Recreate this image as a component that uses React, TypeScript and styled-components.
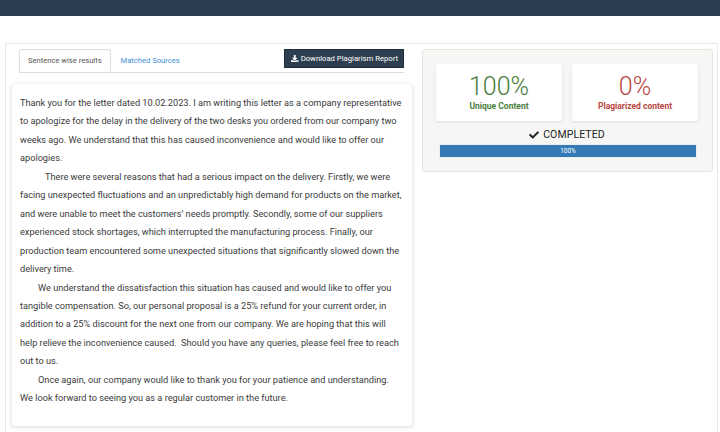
import React, { FC } from 'react';
import styled, { createGlobalStyle } from 'styled-components';
import { FaDownload, FaCheck } from 'react-icons/fa';

const GlobalStyle = createGlobalStyle`
  html, body {
    margin: 0;
    padding: 0;
    background: #ffffff;
    font-family: Roboto, 'Liberation Sans', Arial, sans-serif;
  }
`;

const TopBar = styled.header`
  height: 16px;
  background: #2c3e50;
`;

const Frame = styled.main`
  display: flex;
  gap: 10px;
  margin: 27px 2px 0 5px;
  padding: 5px 4px 0 6px;
  border: 1px solid #e8e8e8;
  border-bottom: none;
  height: 400px;
  box-sizing: border-box;
`;

const LeftColumn = styled.section`
  width: 400px;
  display: flex;
  flex-direction: column;
`;

const TabRow = styled.nav`
  display: flex;
  align-items: flex-start;
  height: 23px;
  margin: 0 8px 0 7px;
  border-bottom: 1px solid #dddddd;
`;

const Tab = styled.div<{ active?: boolean }>`
  height: 23px;
  box-sizing: border-box;
  padding: 0 8px;
  display: flex;
  align-items: center;
  font-size: 7.6px;
  color: ${({ active }) => (active ? '#555555' : '#3d8fd6')};
  background: ${({ active }) => (active ? '#ffffff' : 'transparent')};
  border: 1px solid ${({ active }) => (active ? '#dddddd' : 'transparent')};
  border-bottom-color: ${({ active }) => (active ? '#ffffff' : 'transparent')};
  border-radius: 3px 3px 0 0;
  margin-right: 1px;
`;

const DownloadButton = styled.button`
  margin-left: auto;
  height: 19px;
  padding: 0 5px 0 6px;
  display: flex;
  align-items: center;
  gap: 2px;
  border: 1px solid #1f2d3b;
  background: #2c3e50;
  color: #ffffff;
  font-family: inherit;
  font-size: 7.7px;
  cursor: pointer;
  svg {
    width: 7.5px;
    height: 7.5px;
  }
`;

const TextCard = styled.article`
  margin-top: 11px;
  height: 342px;
  box-sizing: border-box;
  padding: 10px 10px 19px 8px;
  background: #ffffff;
  border-radius: 3px;
  box-shadow: 0 1px 4px rgba(0, 0, 0, 0.16);
  font-size: 9.2px;
  line-height: 18.45px;
  color: #3b3b3b;
`;

const Paragraph = styled.p<{ indent: number }>`
  margin: 0;
  text-indent: ${({ indent }) => indent}px;
`;

const RightColumn = styled.aside`
  width: 291px;
`;

const SummaryPanel = styled.div`
  box-sizing: border-box;
  padding: 14px 14px 13px 13px;
  background: #f6f6f5;
  border: 1px solid #e6e6dc;
  border-radius: 3px;
`;

const StatRow = styled.div`
  display: flex;
  gap: 10px;
`;

const StatCard = styled.div<{ tone: string }>`
  flex: 1;
  height: 57px;
  display: flex;
  flex-direction: column;
  align-items: center;
  justify-content: center;
  background: #ffffff;
  border-radius: 2px;
  box-shadow: 0 1px 3px rgba(0, 0, 0, 0.1);
  color: ${({ tone }) => tone};
`;

const StatValue = styled.div`
  font-size: 25px;
  font-weight: 300;
  line-height: 26px;
`;

const StatLabel = styled.div`
  font-size: 8.5px;
  font-weight: 700;
  line-height: 12px;
`;

const Status = styled.div`
  margin-top: 8px;
  display: flex;
  align-items: center;
  justify-content: center;
  gap: 4px;
  font-size: 10.5px;
  line-height: 12px;
  color: #222222;
  letter-spacing: 0.1px;
  svg {
    width: 10px;
    height: 10px;
  }
`;

const ProgressTrack = styled.div`
  margin: 3px 1px 0 3px;
  height: 14px;
  box-sizing: border-box;
  padding: 1px;
  background: #ececec;
  border-radius: 1px;
`;

const ProgressFill = styled.div`
  height: 100%;
  background: #337ab7;
  color: #ffffff;
  font-size: 6.5px;
  display: flex;
  align-items: center;
  justify-content: center;
`;

const letter: { indent: number; text: string }[] = [
  {
    indent: 0,
    text: 'Thank you for the letter dated 10.02.2023. I am writing this letter as a company representative to apologize for the delay in the delivery of the two desks you ordered from our company two weeks ago. We understand that this has caused inconvenience and would like to offer our apologies.',
  },
  {
    indent: 25,
    text: 'There were several reasons that had a serious impact on the delivery. Firstly, we were facing unexpected fluctuations and an unpredictably high demand for products on the market, and were unable to meet the customers\u2019 needs promptly. Secondly, some of our suppliers experienced stock shortages, which interrupted the manufacturing process. Finally, our production team encountered some unexpected situations that significantly slowed down the delivery time.',
  },
  {
    indent: 18,
    text: 'We understand the dissatisfaction this situation has caused and would like to offer you tangible compensation. So, our personal proposal is a 25% refund for your current order, in addition to a 25% discount for the next one from our company. We are hoping that this will help relieve the inconvenience caused.\u00a0 Should you have any queries, please feel free to reach out to us.',
  },
  {
    indent: 18,
    text: 'Once again, our company would like to thank you for your patience and understanding. We look forward to seeing you as a regular customer in the future.',
  },
];

const progress = 100;

const App: FC = () => (
  <>
    <GlobalStyle />
    <TopBar />
    <Frame>
      <LeftColumn>
        <TabRow>
          <Tab active>Sentence wise results</Tab>
          <Tab>Matched Sources</Tab>
          <DownloadButton>
            <FaDownload />
            Download Plagiarism Report
          </DownloadButton>
        </TabRow>
        <TextCard>
          {letter.map((p, i) => (
            <Paragraph key={i} indent={p.indent}>
              {p.text}
            </Paragraph>
          ))}
        </TextCard>
      </LeftColumn>
      <RightColumn>
        <SummaryPanel>
          <StatRow>
            <StatCard tone="#4a7d3b">
              <StatValue>100%</StatValue>
              <StatLabel>Unique Content</StatLabel>
            </StatCard>
            <StatCard tone="#b9473f">
              <StatValue>0%</StatValue>
              <StatLabel>Plagiarized content</StatLabel>
            </StatCard>
          </StatRow>
          <Status>
            <FaCheck />
            COMPLETED
          </Status>
          <ProgressTrack>
            <ProgressFill style={{ width: `${progress}%` }}>{progress}%</ProgressFill>
          </ProgressTrack>
        </SummaryPanel>
      </RightColumn>
    </Frame>
  </>
);

export default App;
